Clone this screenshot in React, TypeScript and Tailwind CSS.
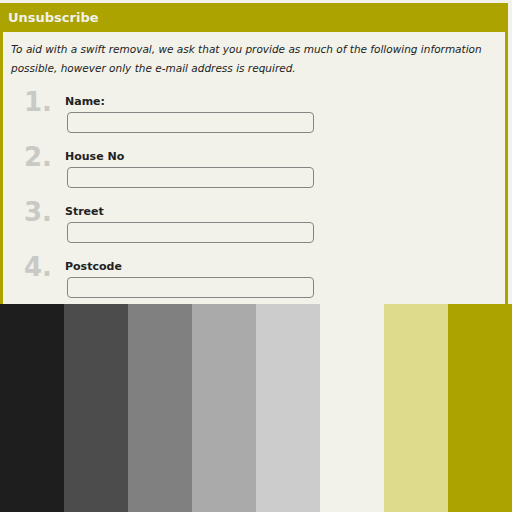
const swatches = ['bg-[#1e1e1e]', 'bg-[#4c4c4c]', 'bg-[#808080]', 'bg-[#aaaaaa]', 'bg-[#cccccc]', 'bg-[#f2f2ea]', 'bg-[#dfdb8c]', 'bg-[#aca300]'];

const fields = ['Name:', 'House No', 'Street', 'Postcode'];

const Field = ({ n, label }: { n: number; label: string }) => (
  <div className="flex h-[55px] items-start">
    <div className="w-[41px] pl-[21px] box-content text-[26px] leading-[26px] font-bold text-[#c9c9c6]">{n}.</div>
    <div className="flex flex-col pt-[4px]">
      <span className="text-[11px] leading-[17px] font-bold text-[#222]">{label}</span>
      <div className="mt-[2px] ml-[2px] w-[247px] h-[21px] rounded-[4px] border border-[#858585] bg-[#f2f2ea]" />
    </div>
  </div>
);

export default function App() {
  return (
    <div className="w-[512px] h-[512px] overflow-hidden bg-[#f2f2ea] flex flex-col" style={{ fontFamily: '"DejaVu Sans", Verdana, sans-serif' }}>
      <div className="h-[304px] pt-[3px] overflow-hidden">
        <div className="w-[508px]">
          <div className="h-[29px] bg-[#aca300] px-[8px] flex items-center">
            <h1 className="text-[13px] font-bold text-[#f2f2ea]">Unsubscribe</h1>
          </div>
          <div className="border-x-[3px] border-[#aca300] bg-[#f2f2ea] pt-[8px] h-[300px]">
            <p className="pl-[8px] pr-[4px] text-[10.5px] leading-[19px] italic text-[#222]">
              To aid with a swift removal, we ask that you provide as much of the following information possible, however only the e-mail address is required.
            </p>
            <div className="mt-[11px]">
              {fields.map((f, i) => (
                <Field key={f} n={i + 1} label={f} />
              ))}
            </div>
          </div>
        </div>
      </div>
      <div className="flex flex-1">
        {swatches.map((s) => (
          <div key={s} className={`w-[64px] ${s}`} />
        ))}
      </div>
    </div>
  );
}
